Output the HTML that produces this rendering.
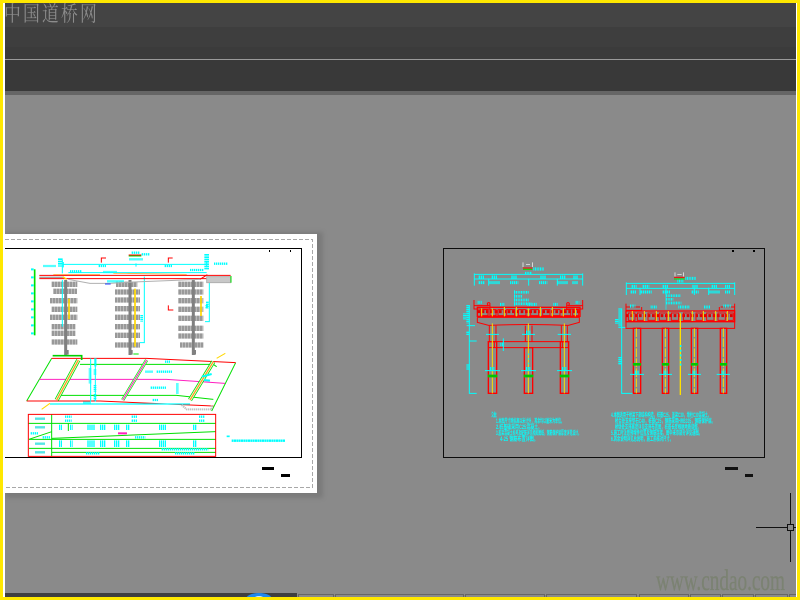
<!DOCTYPE html>
<html lang="zh">
<head>
<meta charset="utf-8">
<title>中国道桥网</title>
<style>
html,body{margin:0;padding:0;width:800px;height:600px;overflow:hidden;background:#8a8a8a}
svg{display:block;position:absolute;left:0;top:0}
text{font-family:"Liberation Sans","Noto Sans CJK SC",sans-serif}
</style>
</head>
<body>
<svg width="800" height="600" viewBox="0 0 800 600" xmlns="http://www.w3.org/2000/svg">
<defs><filter id="b" x="-5%" y="-5%" width="110%" height="110%"><feGaussianBlur stdDeviation="2"/></filter></defs>
<rect width="800" height="600" fill="#8a8a8a"/>
<!-- top bar -->
<rect x="4" y="3" width="793" height="24" fill="#444"/>
<rect x="4" y="27" width="793" height="20" fill="#3e3e3e"/>
<rect x="4" y="47" width="793" height="12" fill="#3b3b3b"/>
<rect x="4" y="59" width="793" height="1" fill="#9a9a9a"/>
<rect x="4" y="60" width="793" height="31" fill="#393939"/>
<rect x="4" y="91" width="793" height="4" fill="#666"/>

<!-- left sheet -->
<rect x="5" y="232" width="318" height="266" fill="#6c6c6c" opacity=".5" filter="url(#b)"/>
<rect x="5" y="234" width="312" height="259" fill="#fff"/>
<path d="M5 239.500H312.500V487.500H5" fill="none" stroke="#a8a8a8" stroke-dasharray="4 2"/>
<path d="M5 248.500H301.500V457.500H5" fill="none" stroke="#000"/>
<rect x="269" y="250" width="1" height="2" fill="#000"/><rect x="290" y="250" width="1" height="2" fill="#000"/>
<rect x="262" y="467" width="12" height="3" fill="#000"/>
<rect x="281" y="474" width="9" height="3" fill="#000"/>

<!-- elevation -->
<g transform="translate(0 230) scale(.33333)" fill="none" stroke-width="3">
<g stroke="#999" stroke-width="16" stroke-dasharray="8 1">
<path d="M155 163H232M160 184H232M150 212H232M155 238H232M150 262H232M155 290H226M155 310H226M155 336H232"/>
<path d="M348 163H412M345 186H420M345 210H420M345 236H420M345 262H420M345 290H420M345 316H420M345 345H420"/>
<path d="M535 163H610M535 186H610M535 212H610M535 238H610M535 265H610M535 295H610M535 318H610M540 345H610"/>
</g>
<path d="M197 150V375M390 150V375M580 150V375" stroke="#808080" stroke-width="9"/>
<path d="M207 206V268" stroke="#ffd800" stroke-width="5"/>
<path d="M405 176V350" stroke="#ffd800" stroke-width="5"/>
<path d="M603 198V258" stroke="#ffd800" stroke-width="5"/>
<path d="M104 118V316" stroke="#00e000" stroke-width="5"/>
<path d="M97 115V320" stroke="#00ffff" stroke-width="8" stroke-dasharray="6 18"/>
<path d="M190 103H620M190 96V112M408 100V110M620 96V112M205 128H620" stroke="#00ffff"/>
<path d="M187 90V130M187 150V290M433 140V338H420M628 150V275H615" stroke="#00ffff"/>
<path d="M181 85V110" stroke="#00ffff" stroke-width="14" stroke-dasharray="5 2"/>
<path d="M620 72V118" stroke="#00ffff" stroke-width="14" stroke-dasharray="5 2"/>
<path d="M130 108H168M642 101H684M210 124H244M310 126H352M570 120H610M296 108H320M494 108H518M395 68H420M425 73H450M388 88H430M322 154H372M620 225V235" stroke="#00ffff" stroke-width="7" stroke-dasharray="4 2"/>
<path d="M425 255V275M622 215V235" stroke="#00ffff" stroke-width="8" stroke-dasharray="4 2"/>
<path d="M118 136H692" stroke="#ff0000"/>
<path d="M118 146H622" stroke="#ff0000"/>
<path d="M160 133H300M340 130 560 133" stroke="#ffa020" stroke-width="2"/>
<path d="M118 142H190" stroke="#a0a0a0" stroke-width="4"/>
<path d="M205 148 270 160H330L400 156 600 148" stroke="#b0b0b0"/>
<path d="M315 162H332" stroke="#2040ff"/>
<path d="M620 140H692V158H620Z" fill="#c8c8c8" stroke="#b0b0b0"/>
<path d="M600 148 622 134" stroke="#ff0000"/>
<path d="M693 138V158" stroke="#00e000"/>
<path d="M386 78H424" stroke="#00e000"/>
<path d="M386 75H424" stroke="#ff0000"/>
<path d="M304 98V84H318M505 98V84H518M505 226V240H520" stroke="#ff0000"/>
<path d="M200 148 188 140" stroke="#ffd800" stroke-width="4"/>
<path d="M400 372H416" stroke="#00e000"/>
</g>

<!-- plan -->
<g transform="translate(0 350) scale(.33333)" fill="none" stroke-width="3">
<path d="M155 25 80 153M707 38 635 183" stroke="#00e000"/>
<path d="M155 25H440L707 38" stroke="#ff0000"/>
<path d="M80 153H300L640 168" stroke="#ff0000"/>
<path d="M240 43H640L650 50M175 136H530L640 148" stroke="#00e000"/>
<path d="M118 88H500L675 100" stroke="#ff20c0"/>
<path d="M150 162H570" stroke="#00ffff" stroke-width="4"/>
<path d="M272 25V155M286 25V155" stroke="#00ffff"/>
<path d="M235 30 170 150" stroke="#00e000" stroke-width="13"/>
<path d="M235 30 170 150" stroke="#fff" stroke-width="8"/>
<path d="M235 30 170 150" stroke="#ffa020" stroke-width="4"/>
<path d="M440 30 368 150" stroke="#00e000" stroke-width="10"/>
<path d="M440 30 368 150" stroke="#fff" stroke-width="6"/>
<path d="M440 30 368 150" stroke="#ff20c0" stroke-width="3"/>
<path d="M640 35 570 150" stroke="#00e000" stroke-width="13"/>
<path d="M640 35 570 150" stroke="#fff" stroke-width="8"/>
<path d="M640 35 570 150" stroke="#ffa020" stroke-width="4"/>
<path d="M158 17H245V30" stroke="#00d000" stroke-width="5"/>
<path d="M125 178 150 160M650 25 676 10" stroke="#ffd800"/>
<path d="M545 165 560 178H635V165" stroke="#c0c0c0" stroke-width="6" stroke-dasharray="4 2"/>
<path d="M200 0V14M392 0V14M582 0V14" stroke="#808080" stroke-width="12"/>
<!-- table -->
<path d="M85 220H647M87 268H647M87 295H647M155 307H647" stroke="#00e000"/>
<path d="M155 265 647 245M87 268 155 245M155 192V320M205 220V243" stroke="#00e000"/>
<path d="M85 193H647V319H85Z" stroke="#ff0000"/>
<path d="M354 250H381" stroke="#ff20c0" stroke-width="6"/>
<path d="M195 200H215M195 212H215M395 200H413M395 212H413M597 200H615M597 212H615" stroke="#00ffff" stroke-width="7" stroke-dasharray="4 2"/>
<path d="M177 232H186M210 232H218M262 232H286M300 232H316M342 232H358M378 232H388M477 232H498M579 232H589" stroke="#00ffff" stroke-width="16" stroke-dasharray="4 2"/>
<path d="M177 281H186M210 281H218M262 281H286M300 281H316M342 281H358M378 281H388M477 281H498M579 281H589" stroke="#00ffff" stroke-width="20" stroke-dasharray="4 2"/>
<path d="M258 310H298M525 310H585M485 298H625M405 262H436M92 250H115M128 262H150" stroke="#00ffff" stroke-width="7" stroke-dasharray="4 2"/>
<path d="M106 206H134M106 232H134M106 281H134M106 307H134" stroke="#00d8d8" stroke-width="7" stroke-dasharray="4 2"/>
<path d="M270 55V100M286 25V50M285 58V75M285 105V125M285 132V152M532 100V132" stroke="#00ffff" stroke-width="8" stroke-dasharray="4 2"/>
<path d="M470 65H518M452 113H500M436 65H460M495 35H510M458 150H475M250 158H272" stroke="#00ffff" stroke-width="7" stroke-dasharray="4 2"/>
<path d="M606 80 635 72M612 90 630 92" stroke="#00ffff" stroke-width="6"/>
<path d="M695 272H855" stroke="#00ffff" stroke-width="7" stroke-dasharray="6 1"/>
<path d="M680 259H689" stroke="#00ffff" stroke-width="5"/>
</g>

<!-- right drawing frame -->
<path d="M443.500 248.500H764.500V457.500H443.500Z" fill="none" stroke="#0c0c0c"/>
<rect x="732" y="250" width="2" height="2" fill="#000"/><rect x="753" y="250" width="2" height="2" fill="#000"/>
<rect x="725" y="467" width="13" height="3" fill="#111"/>
<rect x="745" y="474" width="8" height="3" fill="#111"/>

<g transform="translate(440 245) scale(.33333)" fill="none" stroke-width="3">
<!-- section I dims -->
<path d="M103 88H428M103 102H428M103 85V122M146 100V122M266 100V122M352 100V122M428 85V122" stroke="#00ffff"/>
<path d="M116 96H134M155 96H172M214 96H232M301 96H318M360 96H376M400 96H414M116 113H135M148 113H180M210 113H235M297 113H322M352 113H384M397 113H414" stroke="#00ffff" stroke-width="9" stroke-dasharray="4 2"/>
<path d="M223 135V185" stroke="#00ffff" stroke-width="2"/>
<path d="M223 142H266M223 154H248M223 165H268M223 176H274" stroke="#00ffff" stroke-width="8" stroke-dasharray="3 2"/>
<path d="M249 52V66M277 52V66M258 59H270" stroke="#fff" stroke-width="2"/>
<path d="M249 69H277" stroke="#ff0000"/><path d="M249 73H277" stroke="#00e000"/>
<path d="M280 72H312" stroke="#00ffff" stroke-width="10" stroke-dasharray="3 2"/>
<path d="M255 84H276" stroke="#00ffff" stroke-width="7" stroke-dasharray="3 2"/>
<path d="M88 180V445H110M80 242H105M88 288H110" stroke="#00ffff"/>
<path d="M84 180V235M84 260V272M84 358V376" stroke="#00ffff" stroke-width="10" stroke-dasharray="4 2"/>
<path d="M74 205V225" stroke="#00ffff" stroke-width="10" stroke-dasharray="3 2"/>
<!-- section I cap -->
<path d="M102 165V192H150V180M102 182H145M428 165V192H380V180M428 182H385" stroke="#ff0000"/>
<path d="M112 187H420V214H112Z" stroke="#ff0000" stroke-width="4"/>
<path d="M112 200 420 200" stroke="#e00000" stroke-width="9" stroke-dasharray="8 5"/>
<path d="M122 194H144V212H122ZM150 194H168V212H150ZM174 194H192V212H174ZM200 194H224V212H200ZM235 194H258V212H235ZM272 194H296V212H272ZM308 194H330V212H308ZM338 194H360V212H338ZM370 194H392V212H370ZM398 194H416V212H398Z" stroke="#ff0000" stroke-width="3"/>
<path d="M112 217V232L146 241Q265 236 385 241L418 232V217H112" stroke="#ff0000"/>
<path d="M125 190V214M157 190V214M193 186V214M229 186V214M265 190V214M301 186V214M337 186V214M370 190V214M406 190V214" stroke="#ffe000" stroke-width="3"/>
<circle cx="146" cy="177" r="4" stroke="#ff0000"/><circle cx="384" cy="177" r="4" stroke="#ff0000"/>
<path d="M113 172H125M407 172H418M180 178H194M340 178H354M262 178H292" stroke="#00ffff" stroke-width="9" stroke-dasharray="3 2"/>
<path d="M148 242V290M168 242V290M256 242V290M276 242V290M364 242V290M382 242V290" stroke="#ff0000"/>
<path d="M145 290H385V308H145ZM163 290V308M367 290V308" stroke="#ff0000"/>
<path d="M145 290H170V445H145ZM253 308H278V445H253ZM361 290H386V445H361Z" stroke="#ff0000" stroke-width="4"/>
<path d="M157 235V445M265 235V445M373 235V445" stroke="#ffe000"/>
<path d="M143 393H172M251 393H280M359 393H388" stroke="#00c800" stroke-width="8"/>
<path d="M138 268H177M246 268H285M353 268H393M135 377H180M243 377H288M351 377H396" stroke="#00ffff"/>
<path d="M150 372H165M258 372H272M366 372H380M258 263H272" stroke="#00ffff" stroke-width="12" stroke-dasharray="3 2"/>
<path d="M190 280V318" stroke="#00ffff"/><path d="M181 298H191" stroke="#00ffff" stroke-width="10" stroke-dasharray="3 2"/>
<path d="M266 325V370" stroke="#00ffff" stroke-dasharray="5 9"/>

<!-- section II dims -->
<path d="M559 115H884M559 130H884M559 112V150M600 128V150M678 128V150M763 128V150M806 128V150M884 112V150" stroke="#00ffff"/>
<path d="M575 124H590M608 124H628M668 124H685M757 124H774M815 124H832M855 124H870M572 141H590M602 141H635M668 141H692M755 141H776M808 141H840M855 141H870" stroke="#00ffff" stroke-width="9" stroke-dasharray="4 2"/>
<path d="M705 82V95M730 82V95M712 88H725" stroke="#fff" stroke-width="2"/>
<path d="M702 97H734" stroke="#ff0000"/><path d="M702 102H734" stroke="#00e000"/>
<path d="M736 100H768M712 108H732" stroke="#00ffff" stroke-width="9" stroke-dasharray="3 2"/>
<path d="M678 150V194" stroke="#00ffff" stroke-width="2"/>
<path d="M678 152H722M678 163H700M678 174H724" stroke="#00ffff" stroke-width="8" stroke-dasharray="3 2"/>
<path d="M545 190V445H580M535 247H560" stroke="#00ffff"/>
<path d="M540 190V245M540 336V358M530 222V236" stroke="#00ffff" stroke-width="10" stroke-dasharray="4 2"/>
<!-- section II cap -->
<path d="M558 176V196H605V186M884 176V196H838V186M558 186H600M884 186H842" stroke="#ff0000"/>
<path d="M558 198H884V230H558Z" stroke="#ff0000" stroke-width="4"/>
<path d="M558 212 884 212" stroke="#e00000" stroke-width="9" stroke-dasharray="8 5"/>
<path d="M565 204H585V226H565ZM592 204H612V226H592ZM624 204H646V226H624ZM658 204H680V226H658ZM694 204H716V226H694ZM730 204H752V226H730ZM768 204H788V226H768ZM800 204H822V226H800ZM834 204H856V226H834ZM862 204H880V226H862Z" stroke="#ff0000" stroke-width="3"/>
<path d="M558 230V250H884V230" stroke="#ff0000"/>
<path d="M577 198V228M613 198V228M649 198V228M685 198V228M757 198V228M790 198V228M827 198V228M862 198V228" stroke="#ffe000" stroke-width="3"/>
<path d="M721 205V450" stroke="#ffe000" stroke-width="4"/>
<path d="M570 183H586M632 186H652M715 186H750M792 186H810M850 183H872" stroke="#00ffff" stroke-width="9" stroke-dasharray="3 2"/>
<path d="M580 250H602V445H580ZM667 250H686V445H667ZM754 250H773V445H754ZM841 250H860V445H841Z" stroke="#ff0000" stroke-width="4"/>
<path d="M589 250V445M676 250V445M763 250V445M850 250V445" stroke="#ffe000" stroke-dasharray="26 4"/>
<path d="M579 358H603M666 358H687M753 358H774M840 358H861" stroke="#00c800" stroke-width="8"/>
<path d="M570 388H612M657 388H696M744 388H783M830 388H870" stroke="#00ffff"/>
<path d="M585 383H597M671 383H682M758 383H769M845 383H856" stroke="#00ffff" stroke-width="12" stroke-dasharray="3 2"/>
<path d="M722 300V365" stroke="#00ffff" stroke-width="5" stroke-dasharray="6 8"/>
</g>
<!-- notes -->
<g fill="#00ffff" font-size="6" font-weight="bold">
<text x="491" y="417">注</text>
<text x="496" y="423" textLength="68" lengthAdjust="spacingAndGlyphs">1.本图尺寸除标高以米计外，其余均以厘米为单位。</text>
<text x="496" y="429" textLength="46" lengthAdjust="spacingAndGlyphs">2.桩基础采用C25混凝土。</text>
<text x="496" y="435" textLength="85" lengthAdjust="spacingAndGlyphs">3.盖梁混凝土标号及配筋详见相关图纸，钢筋保护层厚度详见设计。</text>
<text x="500" y="441" textLength="38" lengthAdjust="spacingAndGlyphs">4-25 钢筋布置详图。</text>
<text x="611" y="417" textLength="100" lengthAdjust="spacingAndGlyphs">4.本图适用于桥梁下部结构构造，桩基C25，盖梁C30，墩柱C30混凝土。</text>
<text x="615" y="423" textLength="100" lengthAdjust="spacingAndGlyphs">桥台处支座垫石C40，桩基C25，钢筋采用HRB335，钢筋保护层。</text>
<text x="615" y="429" textLength="86" lengthAdjust="spacingAndGlyphs">桥墩处支座高度详见支座布置图，桩基长度根据地质调整。</text>
<text x="611" y="435" textLength="91" lengthAdjust="spacingAndGlyphs">5.施工时注意预埋件位置及钢筋连接，图中未示部分详见通图。</text>
<text x="611" y="441" textLength="62" lengthAdjust="spacingAndGlyphs">6.其余说明详见总说明，施工前核对尺寸。</text>
</g>

<!-- crosshair -->
<path d="M756 527.500H787M794 527.500H796M790.500 493V524M790.500 531V562" stroke="#111" fill="none"/>
<rect x="787.500" y="524.500" width="6" height="6" fill="none" stroke="#111"/>

<!-- bottom bar -->
<rect x="5" y="593" width="292" height="4" fill="#3f3f3f"/>
<ellipse cx="259" cy="599" rx="13" ry="6" fill="#2088ee"/>
<ellipse cx="259" cy="598.500" rx="5" ry="2.500" fill="#cfe6ff"/>
<g fill="none" stroke="#666">
<rect x="298.500" y="594.500" width="35" height="4"/><rect x="335.500" y="594.500" width="128" height="4"/><rect x="465.500" y="594.500" width="79" height="4"/><rect x="546.500" y="594.500" width="90" height="4"/><rect x="639.500" y="594.500" width="49" height="4"/><rect x="690.500" y="594.500" width="30" height="4"/><rect x="722.500" y="594.500" width="31" height="4"/><rect x="755.500" y="594.500" width="32" height="4"/><rect x="789.500" y="594.500" width="7" height="4"/>
</g>

<!-- watermark -->
<text x="656" y="590" font-size="30" fill="#7b8272" stroke="#7b8272" stroke-width=".3" textLength="129" lengthAdjust="spacingAndGlyphs" style='font-family:"Liberation Serif",serif'>www.cndao.com</text>

<!-- outer frame -->
<rect x="3" y="3" width="2" height="594" fill="#fff"/>
<rect x="796" y="3" width="1" height="594" fill="#fff"/>
<rect x="0" y="0" width="800" height="3" fill="#ffe800"/>
<rect x="0" y="597" width="800" height="3" fill="#ffe800"/>
<rect x="0" y="0" width="3" height="600" fill="#ffe800"/>
<rect x="797" y="0" width="3" height="600" fill="#ffe800"/>
<text transform="translate(4 21) scale(.8 1)" font-size="21" fill="#8c8c8c" textLength="116" lengthAdjust="spacing" style='font-family:"Noto Serif CJK SC",serif'>中国道桥网</text>
</svg>
</body>
</html>
